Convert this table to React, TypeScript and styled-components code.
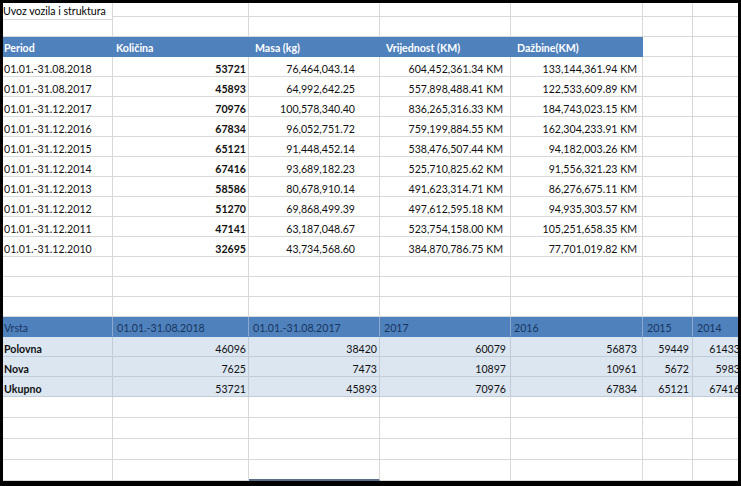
import React from "react";
import styled, { createGlobalStyle, css } from "styled-components";

const Global = createGlobalStyle`
  html, body { margin: 0; padding: 0; background: #fff; }
  body { font-family: Lato, "Open Sans", sans-serif; }
`;

const Frame = styled.div`
  position: relative;
  width: 741px;
  height: 486px;
  box-sizing: border-box;
  border-style: solid;
  border-color: #000;
  border-width: 3px 3px 5px 3px;
  overflow: hidden;
  background: #fff;
`;

const Sheet = styled.div`
  display: grid;
  grid-template-columns: 110px 136px 131px 131px 132px 50px 50px;
  grid-template-rows: 14px 20px 20px repeat(10, 20px) repeat(3, 20px) 20px repeat(3, 20px) repeat(4, 21px);
`;

type Variant = "plain" | "head" | "head2" | "band";

const Cell = styled.div<{
  $variant?: Variant;
  $align?: "left" | "right";
  $bold?: boolean;
  $pad?: number;
  $padLeft?: number;
  $selected?: boolean;
}>`
  box-sizing: border-box;
  display: flex;
  align-items: flex-end;
  justify-content: ${(p) => (p.$align === "right" ? "flex-end" : "flex-start")};
  padding: 0 ${(p) => p.$pad ?? 3}px 0 ${(p) => (p.$align === "right" ? 0 : p.$padLeft ?? 3)}px;
  border-right: 1px solid #d9d9d9;
  border-bottom: 1px solid #d9d9d9;
  font-size: 10.6px;
  line-height: 13px;
  white-space: nowrap;
  overflow: visible;
  color: #111;
  font-weight: ${(p) => (p.$bold ? 700 : 400)};
  ${(p) =>
    p.$variant === "head" &&
    css`
      background: #4f81bd;
      color: #fff;
      font-weight: 700;
      border-right-color: #4f81bd;
      border-bottom-color: #4f81bd;
      padding-bottom: 1px;
    `}
  ${(p) =>
    p.$variant === "head2" &&
    css`
      background: #4f81bd;
      color: #17365f;
      border-right-color: #8ea9d0;
      border-bottom-color: #4f81bd;
      padding-bottom: 1px;
    `}
  ${(p) =>
    p.$variant === "band" &&
    css`
      background: #dce6f1;
      border-right-color: #c3cbd6;
      border-bottom-color: #c3cbd6;
    `}
  ${(p) =>
    p.$selected &&
    css`
      border-bottom: 2px solid #5b6e85;
    `}
`;

const TitleCell = styled.div`
  position: absolute;
  top: -3px;
  left: -3px;
  width: 113px;
  height: 20px;
  box-sizing: border-box;
  background: #fff;
  border-right: 1px solid #d9d9d9;
  border-bottom: 1px solid #d9d9d9;
  padding: 5px 0 0 3px;
  font-size: 10.6px;
  line-height: 13px;
  color: #000;
  white-space: nowrap;
`;

const upper = [
  ["01.01.-31.08.2018", "53721", "76,464,043.14", "604,452,361.34 KM", "133,144,361.94 KM"],
  ["01.01.-31.08.2017", "45893", "64,992,642.25", "557,898,488.41 KM", "122,533,609.89 KM"],
  ["01.01.-31.12.2017", "70976", "100,578,340.40", "836,265,316.33 KM", "184,743,023.15 KM"],
  ["01.01.-31.12.2016", "67834", "96,052,751.72", "759,199,884.55 KM", "162,304,233.91 KM"],
  ["01.01.-31.12.2015", "65121", "91,448,452.14", "538,476,507.44 KM", "94,182,003.26 KM"],
  ["01.01.-31.12.2014", "67416", "93,689,182.23", "525,710,825.62 KM", "91,556,321.23 KM"],
  ["01.01.-31.12.2013", "58586", "80,678,910.14", "491,623,314.71 KM", "86,276,675.11 KM"],
  ["01.01.-31.12.2012", "51270", "69,868,499.39", "497,612,595.18 KM", "94,935,303.57 KM"],
  ["01.01.-31.12.2011", "47141", "63,187,048.67", "523,754,158.00 KM", "105,251,658.35 KM"],
  ["01.01.-31.12.2010", "32695", "43,734,568.60", "384,870,786.75 KM", "77,701,019.82 KM"],
];

const upperHead = ["Period", "Količina", "Masa (kg)", "Vrijednost (KM)", "Dažbine(KM)"];
const upperHeadPadLeft = [1, 3, 6, 6, 6];

const lowerHead = ["Vrsta", "01.01.-31.08.2018", "01.01.-31.08.2017", "2017", "2016", "2015", "2014"];
const lowerHeadPadLeft = [1, 4, 4, 4, 3, 4, 4];
const lower = [
  ["Polovna", "46096", "38420", "60079", "56873", "59449", "61433"],
  ["Nova", "7625", "7473", "10897", "10961", "5672", "5983"],
  ["Ukupno", "53721", "45893", "70976", "67834", "65121", "67416"],
];

const upperPads = [3, 2, 24, 7, 5];
const lowerPads = [3, 2, 2, 4, 5, 3, 2];

const EmptyRow: React.FC<{ selectedCol?: number }> = ({ selectedCol }) => (
  <>
    {Array.from({ length: 7 }).map((_, i) => (
      <Cell key={i} $selected={selectedCol === i} />
    ))}
  </>
);

export default function App() {
  return (
    <>
      <Global />
      <Frame>
        <Sheet>
          <EmptyRow />
          <EmptyRow />
          {upperHead.map((h, i) => (
            <Cell key={h} $variant="head" $padLeft={upperHeadPadLeft[i]}>
              {h}
            </Cell>
          ))}
          <Cell />
          <Cell />
          {upper.map((row) => (
            <React.Fragment key={row[0]}>
              {row.map((v, i) => (
                <Cell
                  key={i}
                  $align={i === 0 ? "left" : "right"}
                  $padLeft={1}
                  $bold={i === 1}
                  $pad={upperPads[i]}
                >
                  {v}
                </Cell>
              ))}
              <Cell />
              <Cell />
            </React.Fragment>
          ))}
          <EmptyRow />
          <EmptyRow />
          <EmptyRow />
          {lowerHead.map((h, i) => (
            <Cell key={h} $variant="head2" $padLeft={lowerHeadPadLeft[i]}>
              {h}
            </Cell>
          ))}
          {lower.map((row) => (
            <React.Fragment key={row[0]}>
              {row.map((v, i) => (
                <Cell
                  key={i}
                  $variant="band"
                  $align={i === 0 ? "left" : "right"}
                  $padLeft={1}
                  $bold={i === 0}
                  $pad={lowerPads[i]}
                >
                  {v}
                </Cell>
              ))}
            </React.Fragment>
          ))}
          <EmptyRow />
          <EmptyRow />
          <EmptyRow />
          <EmptyRow selectedCol={2} />
        </Sheet>
        <TitleCell>Uvoz vozila i struktura</TitleCell>
      </Frame>
    </>
  );
}
